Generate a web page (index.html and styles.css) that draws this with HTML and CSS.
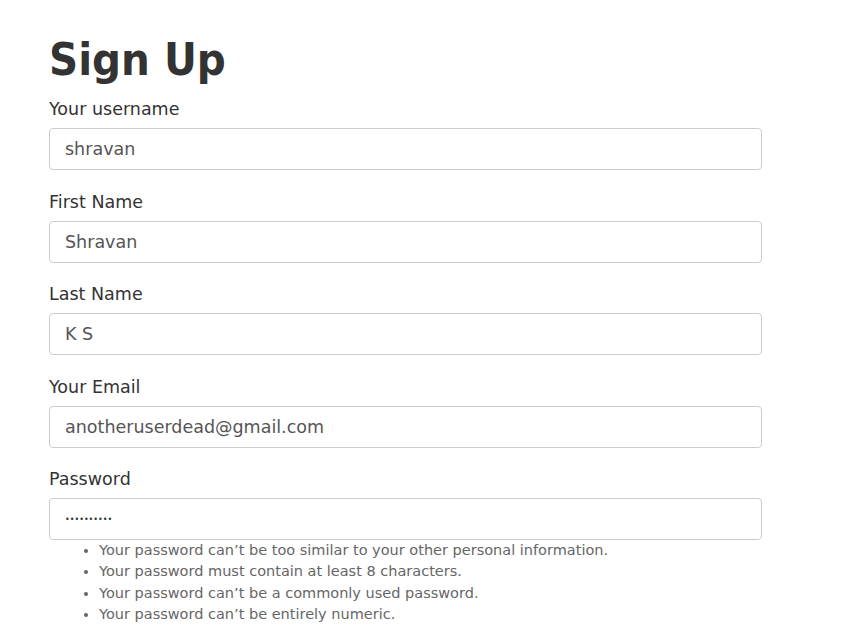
FILE: index.html
```html
<!DOCTYPE html>
<html lang="en">
<head>
<meta charset="utf-8">
<title>Sign Up</title>
<link rel="stylesheet" href="styles.css">
</head>
<body>
<main class="page">
  <h1 class="title">Sign Up</h1>
  <form class="form">
    <div class="field">
      <label class="label">Your username</label>
      <div class="input">shravan</div>
    </div>
    <div class="field">
      <label class="label">First Name</label>
      <div class="input">Shravan</div>
    </div>
    <div class="field">
      <label class="label">Last Name</label>
      <div class="input">K S</div>
    </div>
    <div class="field">
      <label class="label">Your Email</label>
      <div class="input">anotheruserdead@gmail.com</div>
    </div>
    <div class="field">
      <label class="label">Password</label>
      <div class="input input-pw">&bull;&bull;&bull;&bull;&bull;&bull;&bull;&bull;&bull;&bull;</div>
      <ul class="help">
        <li>Your password can’t be too similar to your other personal information.</li>
        <li>Your password must contain at least 8 characters.</li>
        <li>Your password can’t be a commonly used password.</li>
        <li>Your password can’t be entirely numeric.</li>
      </ul>
    </div>
  </form>
</main>
</body>
</html>
```

FILE: styles.css
```css
* { box-sizing: border-box; }
html, body { margin: 0; padding: 0; background: #fff; }
body {
  font-family: "DejaVu Sans", "Open Sans", sans-serif;
  color: #333;
}
.page {
  width: 713px;
  margin-left: 49px;
  padding-top: 36px;
}
.title {
  margin: 0;
  font-family: "DejaVu Sans Condensed", "DejaVu Sans", sans-serif;
  font-weight: 700;
  font-size: 45px;
  line-height: 48px;
  color: #333;
}
.form { display: flex; flex-direction: column; gap: 18.5px; margin-top: 12px; }
.field { display: flex; flex-direction: column; }
.label {
  font-size: 17.5px;
  line-height: 27px;
  margin-bottom: 5px;
  color: #333;
}
.input {
  height: 42px;
  border: 1px solid #ccc;
  border-radius: 4px;
  padding: 0 15px;
  display: flex;
  align-items: center;
  font-size: 17.5px;
  color: #555;
}
.input-pw { font-size: 8px; color: #333; }
.help {
  margin: 0;
  padding-left: 50px;
  font-size: 14.5px;
  line-height: 21.3px;
  color: #666;
}
```
